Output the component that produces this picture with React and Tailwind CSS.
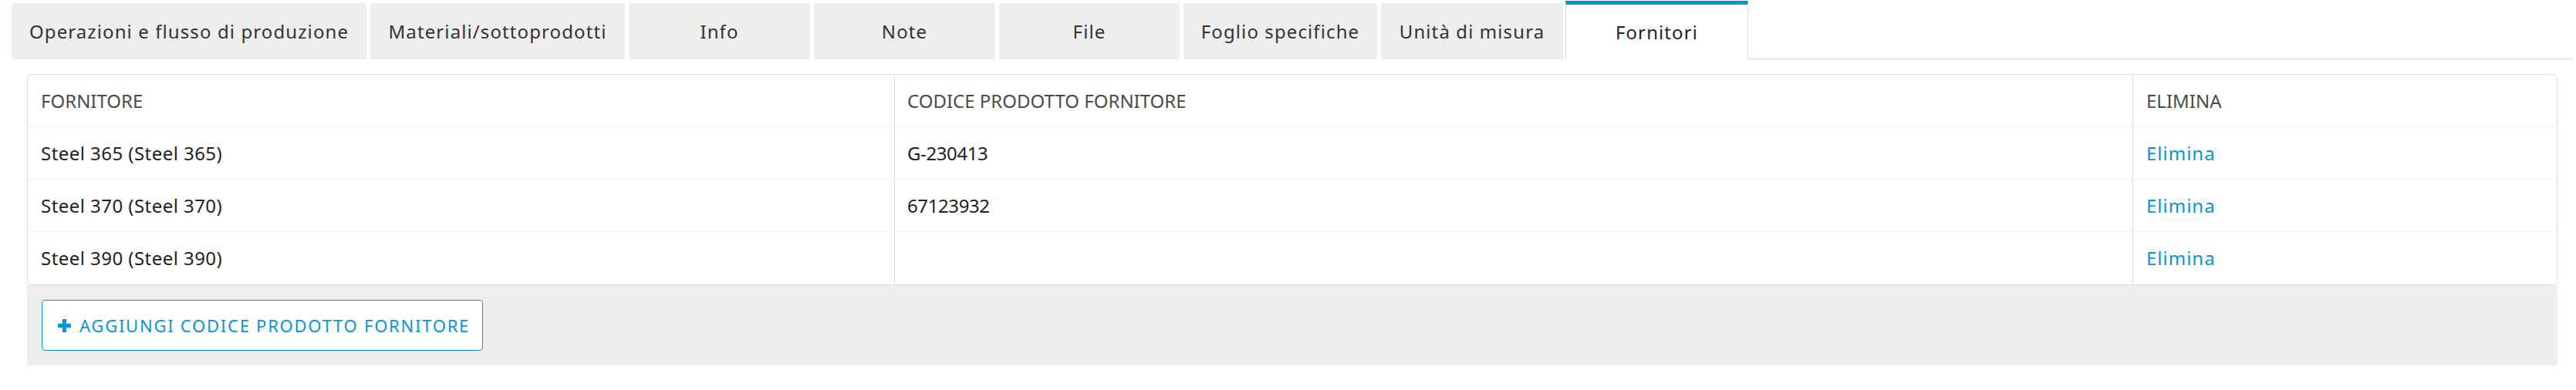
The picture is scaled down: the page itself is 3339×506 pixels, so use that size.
import React from "react";

const tabs = [
  { label: "Operazioni e flusso di produzione", w: "w-[460px]" },
  { label: "Materiali/sottoprodotti", w: "w-[330px]" },
  { label: "Info", w: "w-[235px]" },
  { label: "Note", w: "w-[235px]" },
  { label: "File", w: "w-[234px]" },
  { label: "Foglio specifiche", w: "w-[251px]" },
  { label: "Unità di misura", w: "w-[236px]" },
];

const rows = [
  { supplier: "Steel 365 (Steel 365)", code: "G-230413" },
  { supplier: "Steel 370 (Steel 370)", code: "67123932" },
  { supplier: "Steel 390 (Steel 390)", code: "" },
];

function PlusIcon() {
  return (
    <svg width="17" height="17" viewBox="0 0 17 17" className="shrink-0">
      <rect x="6" y="0" width="5" height="17" fill="#0696d7" />
      <rect x="0" y="6" width="17" height="5" fill="#0696d7" />
    </svg>
  );
}

export default function App() {
  return (
    <div className="min-h-[506px] bg-white font-['Noto_Sans',sans-serif] text-[24px] text-[#222]">
      {/* tabs */}
      <div className="flex h-[77px] items-end pl-[15px] pr-[5px]">
        {tabs.map((t) => (
          <div
            key={t.label}
            className={`${t.w} mr-[5px] flex h-[73px] items-center justify-center rounded-t-[4px] bg-[#eeeeee] tracking-[1.1px] text-[#333]`}
          >
            {t.label}
          </div>
        ))}
        <div className="-ml-[2px] flex h-[76px] w-[237px] items-center justify-center border-x border-t-[5px] border-x-[#dddddd] border-t-[#0696d7] bg-white pt-[1px] tracking-[1.1px] text-[#222]">
          Fornitori
        </div>
        <div className="h-[76px] flex-1 border-b border-[#dddddd]" />
      </div>

      {/* table */}
      <div className="mx-[35px] mt-[19px] mr-[24px]">
        <div className="rounded-[6px] border border-[#dddddd]">
          <div className="grid h-[68px] grid-cols-[1124px_1605px_1fr] items-center border-b border-[#f0f0f0] text-[#4a4a4a]">
            <div className="flex h-full items-center border-r border-[#dddddd] pl-[17px]">FORNITORE</div>
            <div className="flex h-full items-center border-r border-[#dddddd] pl-[16px]">CODICE PRODOTTO FORNITORE</div>
            <div className="flex h-full items-center pl-[17px]">ELIMINA</div>
          </div>
          {rows.map((r, i) => (
            <div
              key={r.supplier}
              className={`grid h-[68px] grid-cols-[1124px_1605px_1fr] items-center ${i < rows.length - 1 ? "border-b border-[#f0f0f0]" : ""}`}
            >
              <div className="flex h-full items-center border-r border-[#dddddd] pl-[17px] tracking-[0.45px]">{r.supplier}</div>
              <div className="flex h-full items-center border-r border-[#dddddd] pl-[16px] tracking-[-0.4px]">{r.code}</div>
              <div className="flex h-full items-center pl-[17px] tracking-[1px] text-[#0696d7]">Elimina</div>
            </div>
          ))}
        </div>
        <div className="h-[104px] bg-[#eeeeee] pl-[19px] pt-[19px]">
          <button className="flex h-[66px] w-[572px] items-center gap-[11px] rounded-[4px] border border-[#0696d7] bg-white pl-[20px] text-[22px] tracking-[1.75px] text-[#0696d7]">
            <PlusIcon />
            AGGIUNGI CODICE PRODOTTO FORNITORE
          </button>
        </div>
      </div>
    </div>
  );
}
